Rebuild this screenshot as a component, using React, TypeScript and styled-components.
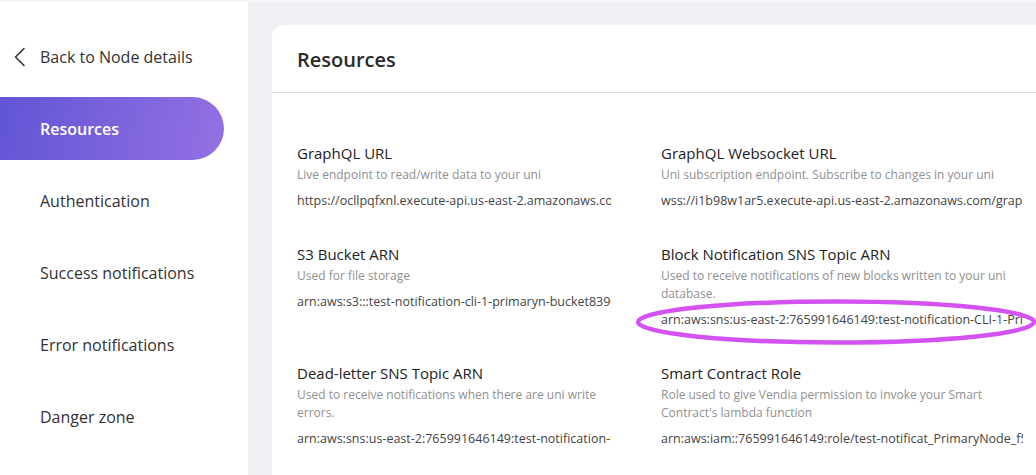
import React from "react";
import styled, { createGlobalStyle } from "styled-components";

const Global = createGlobalStyle`
  html, body { margin: 0; padding: 0; }
  body { font-family: "Open Sans", "Noto Sans", sans-serif; background: #eff0f3; }
  * { box-sizing: border-box; }
`;

const Page = styled.div`
  position: relative;
  display: grid;
  grid-template-columns: 248px 1fr;
  width: 1036px;
  height: 475px;
  overflow: hidden;
  border-top: 2px solid #f6f6f8;
`;

const Sidebar = styled.nav`
  background: #ffffff;
  display: flex;
  flex-direction: column;
  padding-top: 39px;
`;

const BackLink = styled.a`
  display: flex;
  align-items: center;
  gap: 13px;
  height: 32px;
  padding-left: 13px;
  color: #333;
  font-size: 16px;
  text-decoration: none;
  margin-bottom: 24px;
`;

const NavList = styled.div`
  display: flex;
  flex-direction: column;
  gap: 9px;
`;

const NavItem = styled.div<{ $active?: boolean }>`
  display: flex;
  align-items: center;
  width: 224px;
  height: 63px;
  padding-left: 40px;
  font-size: 16px;
  color: ${(p) => (p.$active ? "#ffffff" : "#333")};
  font-weight: ${(p) => (p.$active ? 600 : 400)};
  border-radius: 0 32px 32px 0;
  background: ${(p) =>
    p.$active ? "linear-gradient(100deg, #6155d5 0%, #7b63dc 50%, #9470e4 100%)" : "transparent"};
`;

const Main = styled.main`
  padding: 23px 0 0 24px;
`;

const Card = styled.section`
  width: 776px;
  height: 480px;
  background: #fff;
  border-radius: 12px;
`;

const CardHeader = styled.header`
  height: 68px;
  display: flex;
  align-items: center;
  padding: 2px 0 0 25px;
  border-bottom: 1px solid #dcdbe3;
  font-size: 20px;
  font-weight: 600;
  color: #2a2a2a;
`;

const Grid = styled.div`
  display: grid;
  grid-template-columns: 314px 362px;
  column-gap: 50px;
  row-gap: 34px;
  padding: 50px 25px 0 25px;
`;

const Field = styled.div`
  display: flex;
  flex-direction: column;
  min-width: 0;
`;

const Title = styled.div`
  font-size: 15px;
  line-height: 20px;
  color: #222;
`;

const Desc = styled.div`
  font-size: 12px;
  line-height: 18px;
  margin-top: 3px;
  color: #909090;
`;

const Value = styled.div`
  font-size: 12.5px;
  line-height: 18px;
  margin-top: 8px;
  color: #444;
  white-space: nowrap;
  overflow: hidden;
`;

const Annotation = styled.svg`
  position: absolute;
  left: 634px;
  top: 296px;
  pointer-events: none;
`;

const fields = [
  {
    t: "GraphQL URL",
    d: "Live endpoint to read/write data to your uni",
    v: "https://ocllpqfxnl.execute-api.us-east-2.amazonaws.com/graphql",
  },
  {
    t: "GraphQL Websocket URL",
    d: "Uni subscription endpoint. Subscribe to changes in your uni",
    v: "wss://i1b98w1ar5.execute-api.us-east-2.amazonaws.com/graphql",
  },
  {
    t: "S3 Bucket ARN",
    d: "Used for file storage",
    v: "arn:aws:s3:::test-notification-cli-1-primaryn-bucket83908e77",
  },
  {
    t: "Block Notification SNS Topic ARN",
    d: "Used to receive notifications of new blocks written to your uni database.",
    v: "arn:aws:sns:us-east-2:765991646149:test-notification-CLI-1-PrimaryNode",
  },
  {
    t: "Dead-letter SNS Topic ARN",
    d: "Used to receive notifications when there are uni write errors.",
    v: "arn:aws:sns:us-east-2:765991646149:test-notification-CLI-1",
  },
  {
    t: "Smart Contract Role",
    d: "Role used to give Vendia permission to invoke your Smart Contract's lambda function",
    v: "arn:aws:iam::765991646149:role/test-notificat_PrimaryNode_f5",
  },
];

const nav = ["Resources", "Authentication", "Success notifications", "Error notifications", "Danger zone"];

export default function App() {
  return (
    <>
      <Global />
      <Page>
        <Sidebar>
          <BackLink href="#">
            <svg width="14" height="20" viewBox="0 0 14 20" fill="none">
              <path d="M11 1.5 L2.5 10 L11 18.5" stroke="#333" strokeWidth="1.6" strokeLinecap="round" strokeLinejoin="round" />
            </svg>
            Back to Node details
          </BackLink>
          <NavList>
            {nav.map((n, i) => (
              <NavItem key={n} $active={i === 0}>
                {n}
              </NavItem>
            ))}
          </NavList>
        </Sidebar>
        <Main>
          <Card>
            <CardHeader>Resources</CardHeader>
            <Grid>
              {fields.map((f) => (
                <Field key={f.t}>
                  <Title>{f.t}</Title>
                  <Desc>{f.d}</Desc>
                  <Value>{f.v}</Value>
                </Field>
              ))}
            </Grid>
          </Card>
        </Main>
        <Annotation width="410" height="50" viewBox="0 0 410 50">
          <ellipse cx="202" cy="24" rx="198" ry="20.5" fill="none" stroke="#d452f2" strokeWidth="4.5" />
        </Annotation>
      </Page>
    </>
  );
}
